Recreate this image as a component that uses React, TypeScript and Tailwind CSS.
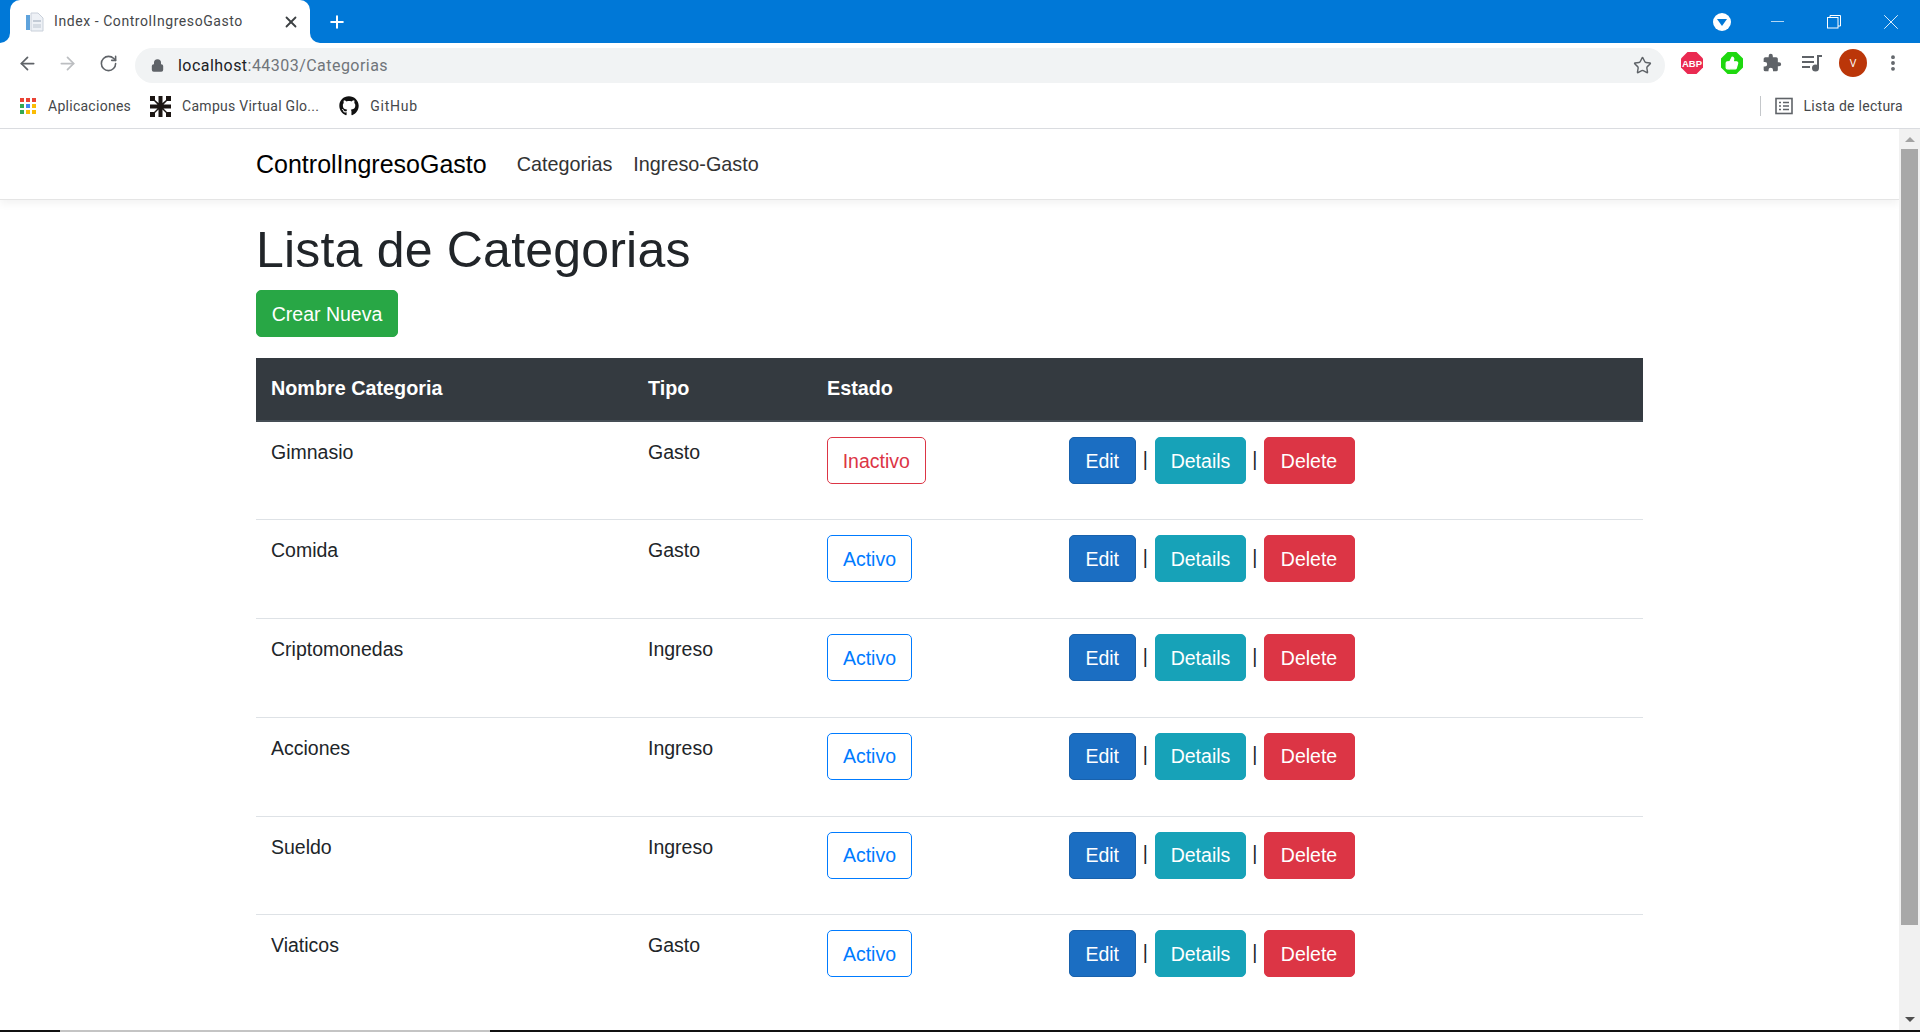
import { ArrowLeft, ArrowRight, RotateCw, Lock, Star, X, Plus, ThumbsUp, Minus, MoreVertical } from "lucide-react"
import { FaGithub } from "react-icons/fa"

const rows = [
  { name: "Gimnasio", type: "Gasto", active: false },
  { name: "Comida", type: "Gasto", active: true },
  { name: "Criptomonedas", type: "Ingreso", active: true },
  { name: "Acciones", type: "Ingreso", active: true },
  { name: "Sueldo", type: "Ingreso", active: true },
  { name: "Viaticos", type: "Gasto", active: true },
]

function TabCorner({ side }: { side: "left" | "right" }) {
  return (
    <span className={`absolute bottom-0 w-[10px] h-[10px] bg-white ${side === "left" ? "left-[-10px]" : "right-[-10px]"}`}>
      <span className={`block w-full h-full bg-[#0078d7] ${side === "left" ? "rounded-br-[10px]" : "rounded-bl-[10px]"}`} />
    </span>
  )
}

function TabFavicon() {
  return (
    <svg width="20" height="20" viewBox="0 0 20 20" className="shrink-0">
      <rect x="1" y="3" width="4" height="15" fill="#5fa3dc" />
      <path d="M6 1h7l5 5v13H6z" fill="#eef1f6" stroke="#c9d0da" strokeWidth="1" />
      <rect x="8" y="8" width="8" height="2" fill="#c3cbd6" />
      <rect x="8" y="12" width="8" height="4" fill="#d5dbe3" />
    </svg>
  )
}

function AppsIcon() {
  const colors = ["#ea4335", "#ea4335", "#ea4335", "#34a853", "#4285f4", "#fbbc04", "#34a853", "#fbbc04", "#fbbc04"]
  return (
    <div className="grid grid-cols-3 gap-[2px] w-[16px] shrink-0">
      {colors.map((c, i) => (
        <span key={i} className="w-[4px] h-[4px]" style={{ backgroundColor: c }} />
      ))}
    </div>
  )
}

function UtnLogo() {
  return (
    <svg width="21" height="21" viewBox="0 0 21 21" className="shrink-0">
      <path d="M0 0h5v4l3.5 3V0h4v7L16 4V0h5v5h-4l-3.5 3.5H21v4h-7.5L17 16h4v5h-5v-4l-3.5-3.5V21h-4v-7.5L5 17v4H0v-5h4l3.5-3.5H0v-4h7.5L4 5H0z" fill="#1b1512" />
    </svg>
  )
}

function AbpIcon() {
  return (
    <svg width="22" height="22" viewBox="0 0 22 22">
      <polygon points="6.5,0 15.5,0 22,6.5 22,15.5 15.5,22 6.5,22 0,15.5 0,6.5" fill="#ea2a51" />
      <text x="11" y="14.5" textAnchor="middle" fontSize="9.5" fontWeight="700" fill="#fff" fontFamily="'Liberation Sans', sans-serif">ABP</text>
    </svg>
  )
}

function PuzzleIcon() {
  return (
    <svg width="20" height="20" viewBox="0 0 24 24" fill="#5f6368">
      <path d="M20.5 11H19V7a2 2 0 0 0-2-2h-4V3.5a2.5 2.5 0 0 0-5 0V5H4a2 2 0 0 0-2 2v3.8h1.5a2.7 2.7 0 0 1 0 5.4H2V20a2 2 0 0 0 2 2h3.8v-1.5a2.7 2.7 0 0 1 5.4 0V22H17a2 2 0 0 0 2-2v-4h1.5a2.5 2.5 0 0 0 0-5z" />
    </svg>
  )
}

function MediaIcon() {
  return (
    <svg width="22" height="20" viewBox="0 0 22 20" fill="#5f6368">
      <rect x="1" y="3" width="12" height="2" />
      <rect x="1" y="8" width="12" height="2" />
      <rect x="1" y="13" width="8" height="2" />
      <rect x="16" y="2" width="2" height="13" />
      <rect x="16" y="2" width="5" height="2" />
      <circle cx="14.5" cy="15" r="3.5" />
    </svg>
  )
}

function ReadingListIcon() {
  return (
    <svg width="18" height="18" viewBox="0 0 18 18" fill="none" stroke="#5f6368" strokeWidth="1.6">
      <rect x="1" y="1.5" width="16" height="15" />
      <path d="M4 5.5h2M8 5.5h6M4 9h2M8 9h6M4 12.5h2M8 12.5h6" />
    </svg>
  )
}

function ActionButton({ label, className }: { label: string; className: string }) {
  return (
    <a className={`inline-block py-[7.5px] text-center rounded-[5px] border-[1.25px] leading-[30px] text-white align-middle ${className}`}>
      {label}
    </a>
  )
}

function BrowserChrome() {
  return (
    <div className="shrink-0 font-['Open_Sans',sans-serif]">
      <div className="h-[43px] bg-[#0078d7] flex items-center">
        <div className="relative ml-[10px] w-[300px] h-[43px] bg-white rounded-t-[10px] flex items-center pl-[15px] pr-[10px] text-[#45474a]">
          <TabCorner side="left" />
          <TabFavicon />
          <span className="ml-[9px] text-[14px] tracking-[0.57px] whitespace-nowrap flex-1 font-['Roboto',sans-serif]">Index - ControlIngresoGasto</span>
          <X size={18} strokeWidth={2.4} className="text-[#3c4043]" />
          <TabCorner side="right" />
        </div>
        <Plus size={20} strokeWidth={2.4} className="ml-[17px] text-white" />
        <div className="ml-auto flex items-center text-white">
          <span className="w-[18px] h-[18px] rounded-full bg-white flex items-center justify-center mr-[36px]">
            <span className="w-0 h-0 border-x-[5px] border-x-transparent border-t-[7px] border-t-[#0078d7] mt-[1px]" />
          </span>
          <Minus size={21} strokeWidth={0.8} className="mr-[39px]" />
          <svg width="14" height="14" viewBox="0 0 14 14" fill="none" stroke="#fff" strokeWidth="1" className="mr-[37px]">
            <rect x="0.5" y="2.5" width="10.5" height="10.5" />
            <path d="M3 2.5V0.5h10.5v10.5H11" />
          </svg>
          <X size={26} strokeWidth={0.8} className="mr-[16px]" />
        </div>
      </div>
      <div className="h-[40px] bg-white flex items-center">
        <ArrowLeft size={21} strokeWidth={2} className="ml-[17px] text-[#5f6368]" />
        <ArrowRight size={21} strokeWidth={2} className="ml-[19px] text-[#bcbec1]" />
        <RotateCw size={19} strokeWidth={2} className="ml-[21px] text-[#5f6368]" />
        <div className="ml-[17px] w-[1530px] h-[35px] mt-[5px] rounded-full bg-[#f1f3f4] flex items-center pl-[16px] pr-[13px]">
          <Lock size={13} strokeWidth={3} fill="#5f6368" className="text-[#5f6368]" />
          <span className="ml-[14px] text-[16px] tracking-[0.46px] text-[#202124] font-['Roboto',sans-serif]">
            localhost<span className="text-[#70757a]">:44303/Categorias</span>
          </span>
          <Star size={19} strokeWidth={1.8} className="ml-auto text-[#5f6368]" />
        </div>
        <div className="ml-[16px] flex items-center">
          <AbpIcon />
          <span className="ml-[18px] w-[22px] h-[22px] bg-[#1ed80f] flex items-center justify-center [clip-path:polygon(30%_0,70%_0,100%_30%,100%_70%,70%_100%,30%_100%,0_70%,0_30%)]">
            <ThumbsUp size={14} fill="#fff" className="text-white" />
          </span>
          <span className="ml-[19px]"><PuzzleIcon /></span>
          <span className="ml-[19px]"><MediaIcon /></span>
          <span className="ml-[16px] w-[28px] h-[28px] rounded-full bg-[#bb3609] text-white text-[11px] flex items-center justify-center">V</span>
          <MoreVertical size={20} strokeWidth={2.6} className="ml-[16px] text-[#5f6368]" />
        </div>
      </div>
      <div className="h-[46px] bg-white border-b border-[#dadce0] flex items-center pt-[1px] text-[14px] tracking-[0.27px] text-[#45474a] font-['Roboto',sans-serif]">
        <span className="ml-[20px]"><AppsIcon /></span>
        <span className="ml-[12px]">Aplicaciones</span>
        <span className="ml-[19px]"><UtnLogo /></span>
        <span className="ml-[11px]">Campus Virtual Glo...</span>
        <FaGithub size={20} className="ml-[20px] text-[#111]" />
        <span className="ml-[11px] tracking-[0.75px]">GitHub</span>
        <span className="ml-auto w-px h-[20px] bg-[#c4c7ca]" />
        <span className="ml-[14px]"><ReadingListIcon /></span>
        <span className="ml-[11px] mr-[17px]">Lista de lectura</span>
      </div>
    </div>
  )
}

export default function App() {
  return (
    <div className="h-screen flex flex-col overflow-hidden bg-white">
      <BrowserChrome />
      <div className="flex-1 flex min-h-0 font-['Liberation_Sans',Arial,sans-serif] text-[19.5px] text-[#212529]">
        <main className="flex-1 min-w-0 overflow-hidden">
          <nav className="h-[71px] pt-[2px] border-b-[1.25px] border-[#e5e5e5] shadow-[0_4px_8px_rgba(0,0,0,0.05)] flex items-center pl-[256px]">
            <span className="text-[25px] text-black">ControlIngresoGasto</span>
            <span className="ml-[30px] text-[19.8px] text-[#333]">Categorias</span>
            <span className="ml-[21px] text-[19.8px] text-[#333]">Ingreso-Gasto</span>
          </nav>
          <div className="ml-[256px] w-[1387px]">
            <h1 className="mt-[20px] text-[50px] leading-[60px] font-normal tracking-[0.2px]">Lista de Categorias</h1>
            <a className="inline-block mt-[10px] w-[142px] text-center py-[7.5px] rounded-[5px] border-[1.25px] border-[#28a745] bg-[#28a745] text-white leading-[30px]">Crear Nueva</a>
            <table className="mt-[21px] w-full table-fixed border-collapse">
              <colgroup>
                <col className="w-[377px]" />
                <col className="w-[179px]" />
                <col className="w-[242px]" />
                <col />
              </colgroup>
              <thead className="bg-[#343a40] text-white text-[19.8px]">
                <tr className="h-[63px]">
                  <th className="px-[15px] text-left font-bold border-b-[2.5px] border-[#454d55]">Nombre Categoria</th>
                  <th className="px-[15px] text-left font-bold border-b-[2.5px] border-[#454d55]">Tipo</th>
                  <th className="px-[15px] text-left font-bold border-b-[2.5px] border-[#454d55]">Estado</th>
                  <th className="border-b-[2.5px] border-[#454d55]" />
                </tr>
              </thead>
              <tbody>
                {rows.map((row, i) => (
                  <tr key={row.name} className={`h-[98.75px] ${i > 0 ? "border-t-[1.25px] border-[#dee2e6]" : ""}`}>
                    <td className="p-[15px] align-top leading-[30px]">{row.name}</td>
                    <td className="p-[15px] align-top leading-[30px]">{row.type}</td>
                    <td className="p-[15px] align-top leading-[30px]">
                      {row.active ? (
                        <a className="inline-block w-[85px] text-center py-[7.5px] rounded-[5px] border-[1.25px] border-[#007bff] text-[#007bff]">Activo</a>
                      ) : (
                        <a className="inline-block w-[98.5px] text-center py-[7.5px] rounded-[5px] border-[1.25px] border-[#dc3545] text-[#dc3545]">Inactivo</a>
                      )}
                    </td>
                    <td className="p-[15px] align-top leading-[30px] whitespace-nowrap">
                      <ActionButton label="Edit" className="w-[66.5px] bg-[#1b6ec2] border-[#1861ac]" />
                      <span className="inline-block w-[19.5px] text-center">|</span>
                      <ActionButton label="Details" className="w-[91px] bg-[#17a2b8] border-[#17a2b8]" />
                      <span className="inline-block w-[17.5px] text-center">|</span>
                      <ActionButton label="Delete" className="w-[91px] bg-[#dc3545] border-[#dc3545]" />
                    </td>
                  </tr>
                ))}
              </tbody>
            </table>
          </div>
        </main>
        <aside className="w-[21px] shrink-0 bg-[#f1f1f1] flex flex-col items-center">
          <span className="mt-[8px] w-0 h-0 border-x-[5px] border-x-transparent border-b-[5px] border-b-[#a3a3a3]" />
          <span className="mt-[7px] w-[17px] h-[776px] bg-[#a8a8a8]" />
          <span className="mt-auto mb-[8px] w-0 h-0 border-x-[5px] border-x-transparent border-t-[5px] border-t-[#505050]" />
        </aside>
      </div>
      <div className="h-[2px] shrink-0 bg-[#111] flex">
        <span className="ml-[60px] w-[430px] bg-[#c4c4c4]" />
      </div>
    </div>
  )
}
